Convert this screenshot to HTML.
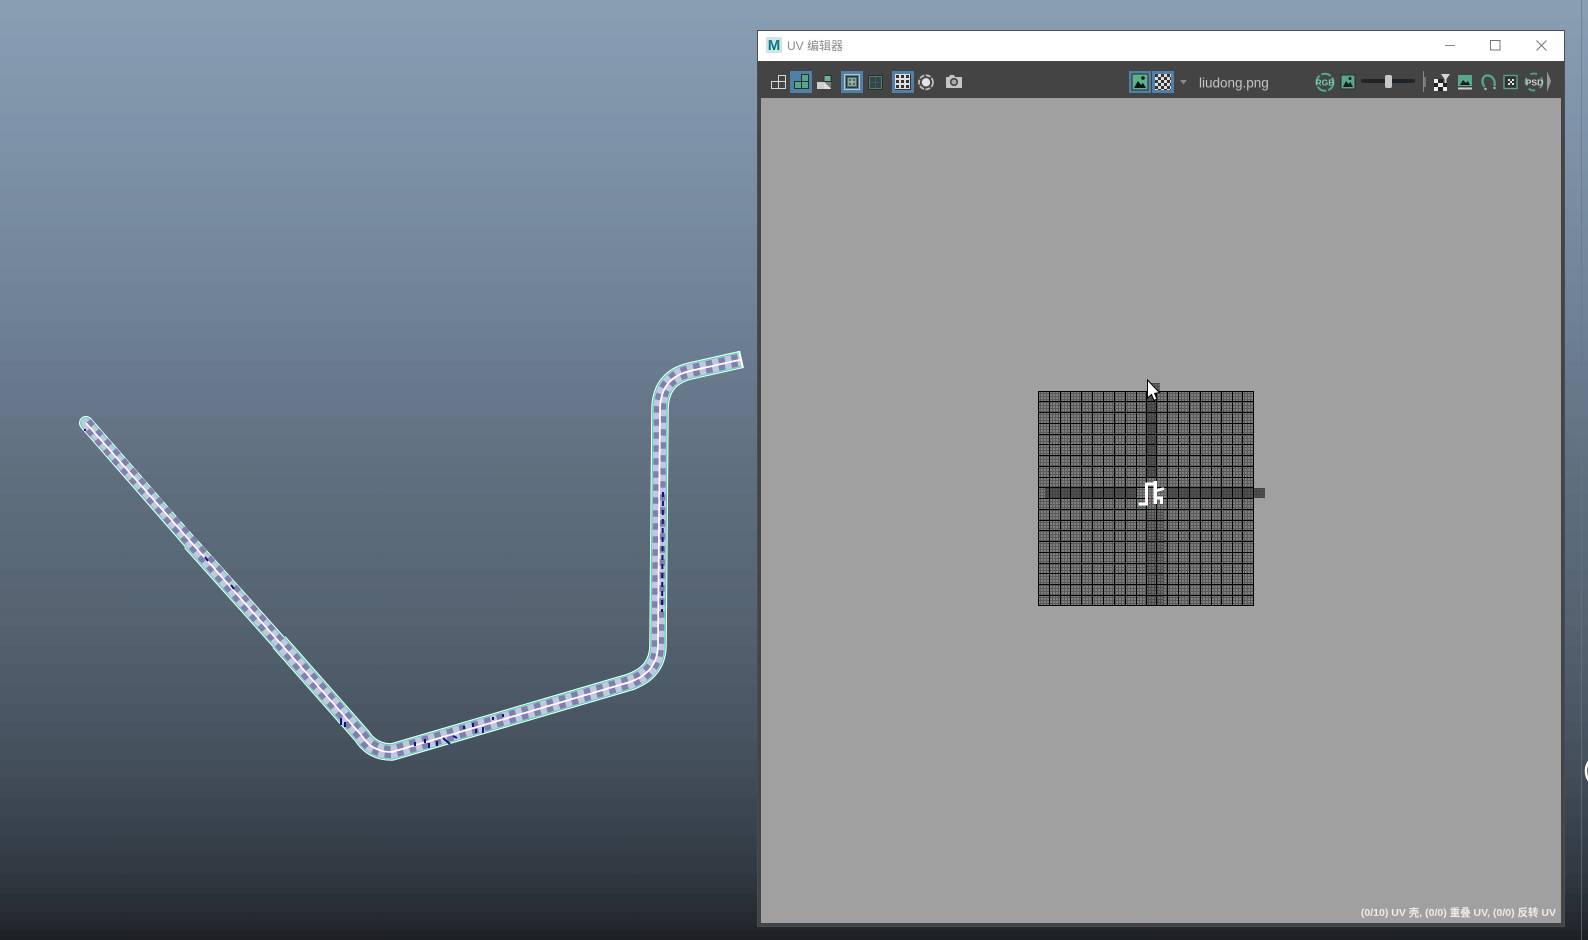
<!DOCTYPE html>
<html lang="zh">
<head>
<meta charset="utf-8">
<title>UV 编辑器</title>
<style>
html,body{margin:0;padding:0;background:#1c1f23;}
body{width:1588px;height:940px;overflow:hidden;position:relative;}
svg{position:absolute;left:0;top:0;display:block;}
text{font-family:"Liberation Sans","Noto Sans CJK SC",sans-serif;}
</style>
</head>
<body>
<svg width="1588" height="940" viewBox="0 0 1588 940" xmlns="http://www.w3.org/2000/svg">
<defs>
<linearGradient id="bg" x1="0" y1="0" x2="0" y2="1">
<stop offset="0" stop-color="#889eb3"/>
<stop offset=".16" stop-color="#7c91a7"/>
<stop offset=".32" stop-color="#6f8298"/>
<stop offset=".5" stop-color="#5f6e7e"/>
<stop offset=".66" stop-color="#546270"/>
<stop offset=".8" stop-color="#44505c"/>
<stop offset=".93" stop-color="#2f3841"/>
<stop offset=".98" stop-color="#23282c"/>
<stop offset="1" stop-color="#1c1f23"/>
</linearGradient>
<linearGradient id="bands" gradientUnits="userSpaceOnUse" x1="0" y1="0" x2="0" y2="19" spreadMethod="repeat">
<stop offset="0" stop-color="#fff" stop-opacity="0"/>
<stop offset="1" stop-color="#fff" stop-opacity=".014"/>
</linearGradient>
<linearGradient id="logoM" x1="0" y1="0" x2="0" y2="1">
<stop offset="0" stop-color="#0d8d96"/>
<stop offset="1" stop-color="#0a5f70"/>
</linearGradient>
<pattern id="fine" width="3" height="3" patternUnits="userSpaceOnUse" x="1038" y="391">
<rect width="3" height="3" fill="#5a5a5a"/>
<rect width="2" height="2" fill="#7e7e7e"/>
</pattern>
<pattern id="fineDark" width="3" height="3" patternUnits="userSpaceOnUse">
<rect width="3" height="3" fill="#434343"/>
<rect width="2" height="2" fill="#525252"/>
</pattern>
<pattern id="fineMid" width="3" height="3" patternUnits="userSpaceOnUse">
<rect width="3" height="3" fill="#4c4c4c"/>
<rect width="2" height="2" fill="#6a6a6a"/>
</pattern>
<pattern id="chk" width="6" height="6" patternUnits="userSpaceOnUse" x="1155" y="74">
<rect width="6" height="6" fill="#dcdcdc"/>
<rect width="3" height="3" fill="#333"/>
<rect x="3" y="3" width="3" height="3" fill="#333"/>
</pattern>
</defs>

<rect width="1588" height="940" fill="url(#bg)"/>
<rect width="1588" height="940" fill="url(#bands)"/>

<!-- far right strip -->
<rect x="1581" y="0" width="1" height="940" fill="#6a7480" opacity=".65"/>
<circle cx="1603" cy="771" r="17" fill="#20262b" stroke="#fff" stroke-width="2.5"/>

<!-- tube -->
<g fill="none" stroke-linejoin="round">
<g stroke="#fff">
<path d="M86 423L195 548" stroke-width="14" stroke-linecap="round"/>
<path d="M190 543L285 649" stroke-width="15.5"/>
<path d="M279 642L362 736Q372 752 392 752L630 682Q658 672 658 645L660 410Q660 378 690 371L742 359.3" stroke-width="17.5"/>
</g>
<g stroke="#41dfae">
<path d="M86 423L195 548" stroke-width="12" stroke-linecap="round"/>
<path d="M190 543L285 649" stroke-width="13.5"/>
<path d="M279 642L362 736Q372 752 392 752L630 682Q658 672 658 645L660 410Q660 378 690 371L740 359.8" stroke-width="15.5"/>
</g>
<g stroke="#c3c6e0">
<path d="M86 423L195 548" stroke-width="10" stroke-linecap="round"/>
<path d="M190 543L285 649" stroke-width="11.5"/>
<path d="M279 642L362 736Q372 752 392 752L630 682Q658 672 658 645L660 410Q660 378 690 371L740 359.8" stroke-width="13.5"/>
</g>
<path d="M88.6 420.7L364.6 733.7Q374.5 748.5 391 748.6L629 678.6Q655.5 669.5 654.5 645L656.5 410Q657.5 375.5 689.2 367.6L739 356.5" stroke="#7f80ad" stroke-width="5.5" stroke-dasharray="6.5 6.5"/>
<path d="M83.4 425.3L359.4 738.3Q369.5 755.5 393 755.4L631 685.4Q660.5 674.5 661.5 645L663.5 410Q662.5 380.5 690.8 374.4L740 363.4" stroke="#7f80ad" stroke-width="5.5" stroke-dasharray="6.5 6.5" stroke-dashoffset="6.5"/>
<path d="M86 423L362 736Q372 752 392 752L630 682Q658 672 658 645L660 410Q660 378 690 371L741 359.6" stroke="#fff" stroke-width="1.7"/>
<!-- navy marks -->
<g stroke="#12127e" stroke-width="2">
<path d="M663 492L662 612" stroke-dasharray="5 4"/>
<path d="M415 742v4M425 739v4M429 743v5M437 741v5M443 738l7 6M453 736l4 2M464 726v3M473 723v4M476 729v4M483 727v6M493 717v3M503 714v3M341 718v7M345 722v5M205 557l3 4M231 585l3 4M85 429v2"/>
</g>
</g>

<!-- window -->
<rect x="757" y="30" width="808" height="897" fill="#454d58"/>
<rect x="758" y="31" width="806" height="895" fill="#444"/>
<rect x="758" y="31" width="806" height="30" fill="#fff"/>
<rect x="761" y="98" width="800" height="825" fill="#a0a0a0"/>

<!-- title bar -->
<rect x="766" y="37" width="16" height="16" fill="#cfe6e6"/>
<text x="774" y="50" text-anchor="middle" font-size="15" font-weight="bold" fill="url(#logoM)">M</text>
<text x="787" y="50" font-size="12" fill="#8a8a8a">UV 编辑器</text>
<path d="M1445 45.5h10" stroke="#8a8a8a" fill="none"/>
<rect x="1490.5" y="40.5" width="9.5" height="9.5" fill="none" stroke="#777"/>
<path d="M1536.5 40.5l10 10M1546.5 40.5l-10 10" stroke="#777" fill="none"/>

<!-- toolbar highlights -->
<g fill="#4f80a5">
<rect x="790" y="71" width="22" height="22"/>
<rect x="841" y="71" width="22" height="22"/>
<rect x="892" y="71" width="22" height="22"/>
<rect x="1129" y="71" width="22" height="22"/>
<rect x="1152" y="71" width="22" height="22"/>
</g>

<!-- left toolbar icons -->
<g fill="none" shape-rendering="crispEdges">
<path d="M778.5 75.5h7v6h-7zM771.5 81.5h7v7h-7zM778.5 81.5h7v7h-7z" stroke="#d8d8d8"/>
<path d="M801.5 74.5h7v7h-7zM794.5 81.5h7v7h-7zM801.5 81.5h7v7h-7z" stroke="#2e2e2e" fill="#57a58a"/>
<path d="M824 75.5h7v6h-7z" stroke="#2e2e2e" fill="#69b593"/>
<rect x="817" y="82" width="7" height="7" fill="#d0d0d0"/>
<rect x="824" y="82" width="7" height="7" fill="#7c7c7c"/>
<path d="M824 82l7 7h-7z" fill="#e0e0e0"/>
<rect x="844.5" y="74.5" width="15" height="15" stroke="#c4c4c4"/>
<rect x="846.5" y="76.5" width="11" height="11" stroke="#333" fill="#4a6f66"/>
<rect x="848.5" y="78.5" width="7" height="7" stroke="#88a89c"/>
<path d="M852 79v6M849 82h6" stroke="#c9d6cc"/>
<rect x="868.5" y="75.5" width="14" height="14" stroke="#2b2b2b"/>
<rect x="869.5" y="76.5" width="12" height="12" stroke="#4f8072" fill="#33474a"/>
<path d="M875.5 77v11M870 82.5h11" stroke="#455a5a"/>
<rect x="895" y="74" width="16" height="16" fill="#333"/>
<g stroke="#dedede">
<rect x="895.5" y="74.5" width="4" height="4"/><rect x="900.5" y="74.5" width="4" height="4"/><rect x="905.5" y="74.5" width="4" height="4"/>
<rect x="895.5" y="79.5" width="4" height="4"/><rect x="900.5" y="79.5" width="4" height="4"/><rect x="905.5" y="79.5" width="4" height="4"/>
<rect x="895.5" y="84.5" width="4" height="4"/><rect x="900.5" y="84.5" width="4" height="4"/><rect x="905.5" y="84.5" width="4" height="4"/>
</g>
</g>
<circle cx="926" cy="82.3" r="7" fill="none" stroke="#bdbdbd" stroke-width="1.8" stroke-dasharray="5 1.5"/>
<circle cx="926" cy="82.3" r="4.2" fill="#e4e4e4"/>
<path d="M946 77h3l1-2h4l1 2h7v11h-16z" fill="#c4c4c4"/>
<circle cx="954" cy="82" r="4" fill="#3c3c3c"/>
<circle cx="954" cy="82" r="2.5" fill="#aaa"/>

<!-- image / checker toggles -->
<rect x="1132" y="74" width="16" height="16" fill="#5db08c" stroke="#2b2b2b"/>
<path d="M1134 88l4-7 3 4 2-2 3 5z" fill="#111"/>
<circle cx="1143" cy="78" r="1.8" fill="#111"/>
<rect x="1155" y="74" width="16" height="16" fill="url(#chk)" shape-rendering="crispEdges"/>
<path d="M1180 80h7l-3.5 4.5z" fill="#8a8a8a"/>
<text x="1199" y="87.5" font-size="13.5" fill="#c4c4c4">liudong.png</text>

<!-- right toolbar icons -->
<circle cx="1325" cy="82.3" r="8.5" fill="none" stroke="#52ab8a" stroke-width="2" stroke-dasharray="10 2"/>
<text x="1325" y="85.5" text-anchor="middle" font-size="8.5" font-weight="bold" fill="#7cc9a9">RGB</text>
<rect x="1341" y="75" width="14" height="14" fill="#57a98a" stroke="#2d2d2d"/>
<path d="M1343 87l3-6 2.5 3 2-2 2.5 5z" fill="#1a1a1a"/>
<circle cx="1350" cy="78.5" r="1.5" fill="#1a1a1a"/>
<rect x="1361" y="79" width="54" height="4" rx="2" fill="#1f2428"/>
<rect x="1385" y="75" width="7" height="13" rx="2" fill="#c8c8c8"/>
<rect x="1423" y="71" width="1" height="21" fill="#888"/>
<rect x="1424" y="77" width="2" height="10" fill="#777"/>
<path d="M1441 74h9l-3.5 5v4h-2v-4z" fill="#d4d4d4"/>
<g fill="#ececec" shape-rendering="crispEdges">
<rect x="1434" y="79" width="4" height="4"/>
<rect x="1438" y="83" width="5" height="4"/>
<rect x="1434" y="87" width="4" height="4"/>
<rect x="1443" y="87" width="4" height="4"/>
</g>
<g fill="#222" shape-rendering="crispEdges">
<rect x="1438" y="79" width="5" height="4"/>
<rect x="1434" y="83" width="4" height="4"/>
<rect x="1443" y="83" width="4" height="4"/>
<rect x="1438" y="87" width="5" height="4"/>
</g>
<rect x="1458" y="75" width="14" height="11" fill="#57a98a"/>
<path d="M1460 85l3-5 3 3 2-2 2 4z" fill="#1a1a1a"/>
<path d="M1458 88.5h14" stroke="#cfcfcf" stroke-width="2" fill="none"/>
<path d="M1484.5 87C1480.5 81 1483 75 1488 75.5C1493 76 1495.5 81 1494.5 86" fill="none" stroke="#4fa585" stroke-width="2.4"/>
<circle cx="1485.5" cy="89" r="1.2" fill="#bbb"/>
<circle cx="1494.5" cy="88" r="1.2" fill="#bbb"/>
<rect x="1504" y="75.5" width="13" height="13" fill="#333" stroke="#4fa585" stroke-width="1.4"/>
<g fill="#e4e4e4" shape-rendering="crispEdges">
<rect x="1508" y="79" width="2" height="2"/>
<rect x="1512" y="79" width="2" height="2"/>
<rect x="1510" y="81" width="2" height="2"/>
<rect x="1508" y="83" width="2" height="2"/>
<rect x="1512" y="83" width="2" height="2"/>
</g>
<circle cx="1534" cy="82" r="8.5" fill="none" stroke="#4fa585" stroke-width="1.8" stroke-dasharray="7 5"/>
<text x="1534.5" y="85.5" text-anchor="middle" font-size="8.5" font-weight="bold" fill="#d0d0d0">PSD</text>
<path d="M1547 71l4 10-4 11z" fill="#9a9a9a"/>

<!-- UV grid -->
<rect x="1038" y="391" width="216" height="215" fill="url(#fine)" shape-rendering="crispEdges"/>
<g shape-rendering="crispEdges">
<rect x="1147" y="383" width="10" height="94" fill="url(#fineDark)"/>
<rect x="1152" y="383" width="8" height="8" fill="url(#fineMid)"/>
<rect x="1045" y="488" width="92" height="10" fill="url(#fineDark)"/>
<rect x="1168" y="488" width="97" height="10" fill="url(#fineDark)"/>
<rect x="1147" y="509" width="9" height="97" fill="url(#fineMid)"/>
<rect x="1157" y="509" width="7" height="97" fill="url(#fineMid)"/>
<path fill="none" stroke="#000" stroke-width="1" d="M1038.5 391V606M1049.5 391V606M1060.5 391V606M1070.5 391V606M1081.5 391V606M1092.5 391V606M1103.5 391V606M1114.5 391V606M1125.5 391V606M1136.5 391V606M1146.5 391V606M1156.5 391V606M1167.5 391V606M1178.5 391V606M1189.5 391V606M1200.5 391V606M1211.5 391V606M1221.5 391V606M1232.5 391V606M1242.5 391V606M1253.5 391V606M1038 391.5H1254M1038 401.5H1254M1038 412.5H1254M1038 423.5H1254M1038 434.5H1254M1038 444.5H1254M1038 455.5H1254M1038 466.5H1254M1038 477.5H1254M1038 487.5H1254M1038 498.5H1254M1038 509.5H1254M1038 520.5H1254M1038 530.5H1254M1038 541.5H1254M1038 552.5H1254M1038 563.5H1254M1038 573.5H1254M1038 584.5H1254M1038 595.5H1254M1038 605.5H1254"/>
<path fill="none" stroke="#fff" stroke-width="2.7" d="M1138.5 504H1146.5V484H1154.5"/>
<path fill="none" stroke="#fff" stroke-width="3.5" d="M1155 481V504"/>
<path fill="none" stroke="#fff" stroke-width="2.7" d="M1155 491L1164 488.5M1155 498H1161.5V504"/>
<rect x="1149" y="498" width="2" height="1" fill="#d02020"/>
<rect x="1151" y="498" width="2" height="1" fill="#2030c0"/>
</g>

<!-- cursor -->
<path d="M1147.5 380V398L1151.5 394.5L1154 400.5L1157 399L1154.6 393.4L1159.5 392.6Z" fill="#fff" stroke="#000" stroke-width="1"/>

<!-- status -->
<text x="1556" y="916" text-anchor="end" font-size="10.5" font-weight="bold" fill="#ececec">(0/10) UV 壳, (0/0) 重叠 UV, (0/0) 反转 UV</text>
</svg>
</body>
</html>
